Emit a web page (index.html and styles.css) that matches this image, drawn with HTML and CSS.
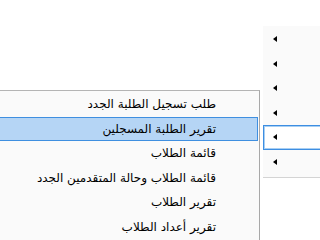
FILE: index.html
```html
<!DOCTYPE html>
<html lang="ar">
<head>
    <meta charset="UTF-8">
    <meta name="viewport" content="width=device-width, initial-scale=1.0">
    <title>قائمة الطلاب</title>
    <link rel="stylesheet" href="styles.css">
</head>
<body>
    <div class="desk">
        <!-- القائمة الرئيسية -->
        <ul class="menu parent">
            <li><span class="arrow"></span></li>
            <li><span class="arrow"></span></li>
            <li><span class="arrow"></span></li>
            <li><span class="arrow"></span></li>
            <li class="on"><span class="arrow"></span></li>
            <li><span class="arrow"></span></li>
        </ul>

        <!-- القائمة الفرعية -->
        <ul class="menu sub" dir="rtl">
            <li>طلب تسجيل الطلبة الجدد</li>
            <li class="on">تقرير الطلبة المسجلين</li>
            <li>قائمة الطلاب</li>
            <li>قائمة الطلاب وحالة المتقدمين الجدد</li>
            <li>تقرير الطلاب</li>
            <li>تقرير أعداد الطلاب</li>
        </ul>
    </div>
</body>
</html>
```

FILE: styles.css
```css
* {
    margin:0;
    padding:0;
    box-sizing:border-box;
}

body {
    background:#fff;
    font-family:"DejaVu Sans", "Noto Sans", sans-serif;
    color:#000;
}

ul, li {
    list-style:none;
}

.desk {
    position:relative;
    width:320px;
    height:240px;
    overflow:hidden;
}

.menu {
    position:absolute;
}

/* parent menu on the right */
.parent {
    left:263px;
    top:26px;
    width:80px;
    padding:1px 0 3px;
    background:#fafafa;
    border-bottom:1px solid #d4d4d4;
}

.parent li {
    display:flex;
    align-items:center;
    height:24.5px;
    padding-left:10px;
}

.parent li.on {
    background:#fff;
    border:1px solid #3d8ee2;
    box-shadow:inset 0 0 0 1px #a8cff3;
    padding-left:9px;
}

.arrow {
    width:0;
    height:0;
    border-top:3.5px solid transparent;
    border-bottom:3.5px solid transparent;
    border-right:4px solid #000;
}

/* sub menu, opens to the left */
.sub {
    left:-40px;
    top:90px;
    width:300px;
    padding:1px 1px 0 0;
    background:#fafafa;
    border-top:1px solid #b4b4b4;
    border-right:1px solid #a8a8a8;
}

.sub li {
    height:24.6px;
    line-height:24.6px;
    padding-right:42px;
    font-size:12px;
    white-space:nowrap;
}

.sub li.on {
    background:#b5d5f5;
    border:1px solid #3f8fe0;
    line-height:22.6px;
    padding-right:41px;
}
```
